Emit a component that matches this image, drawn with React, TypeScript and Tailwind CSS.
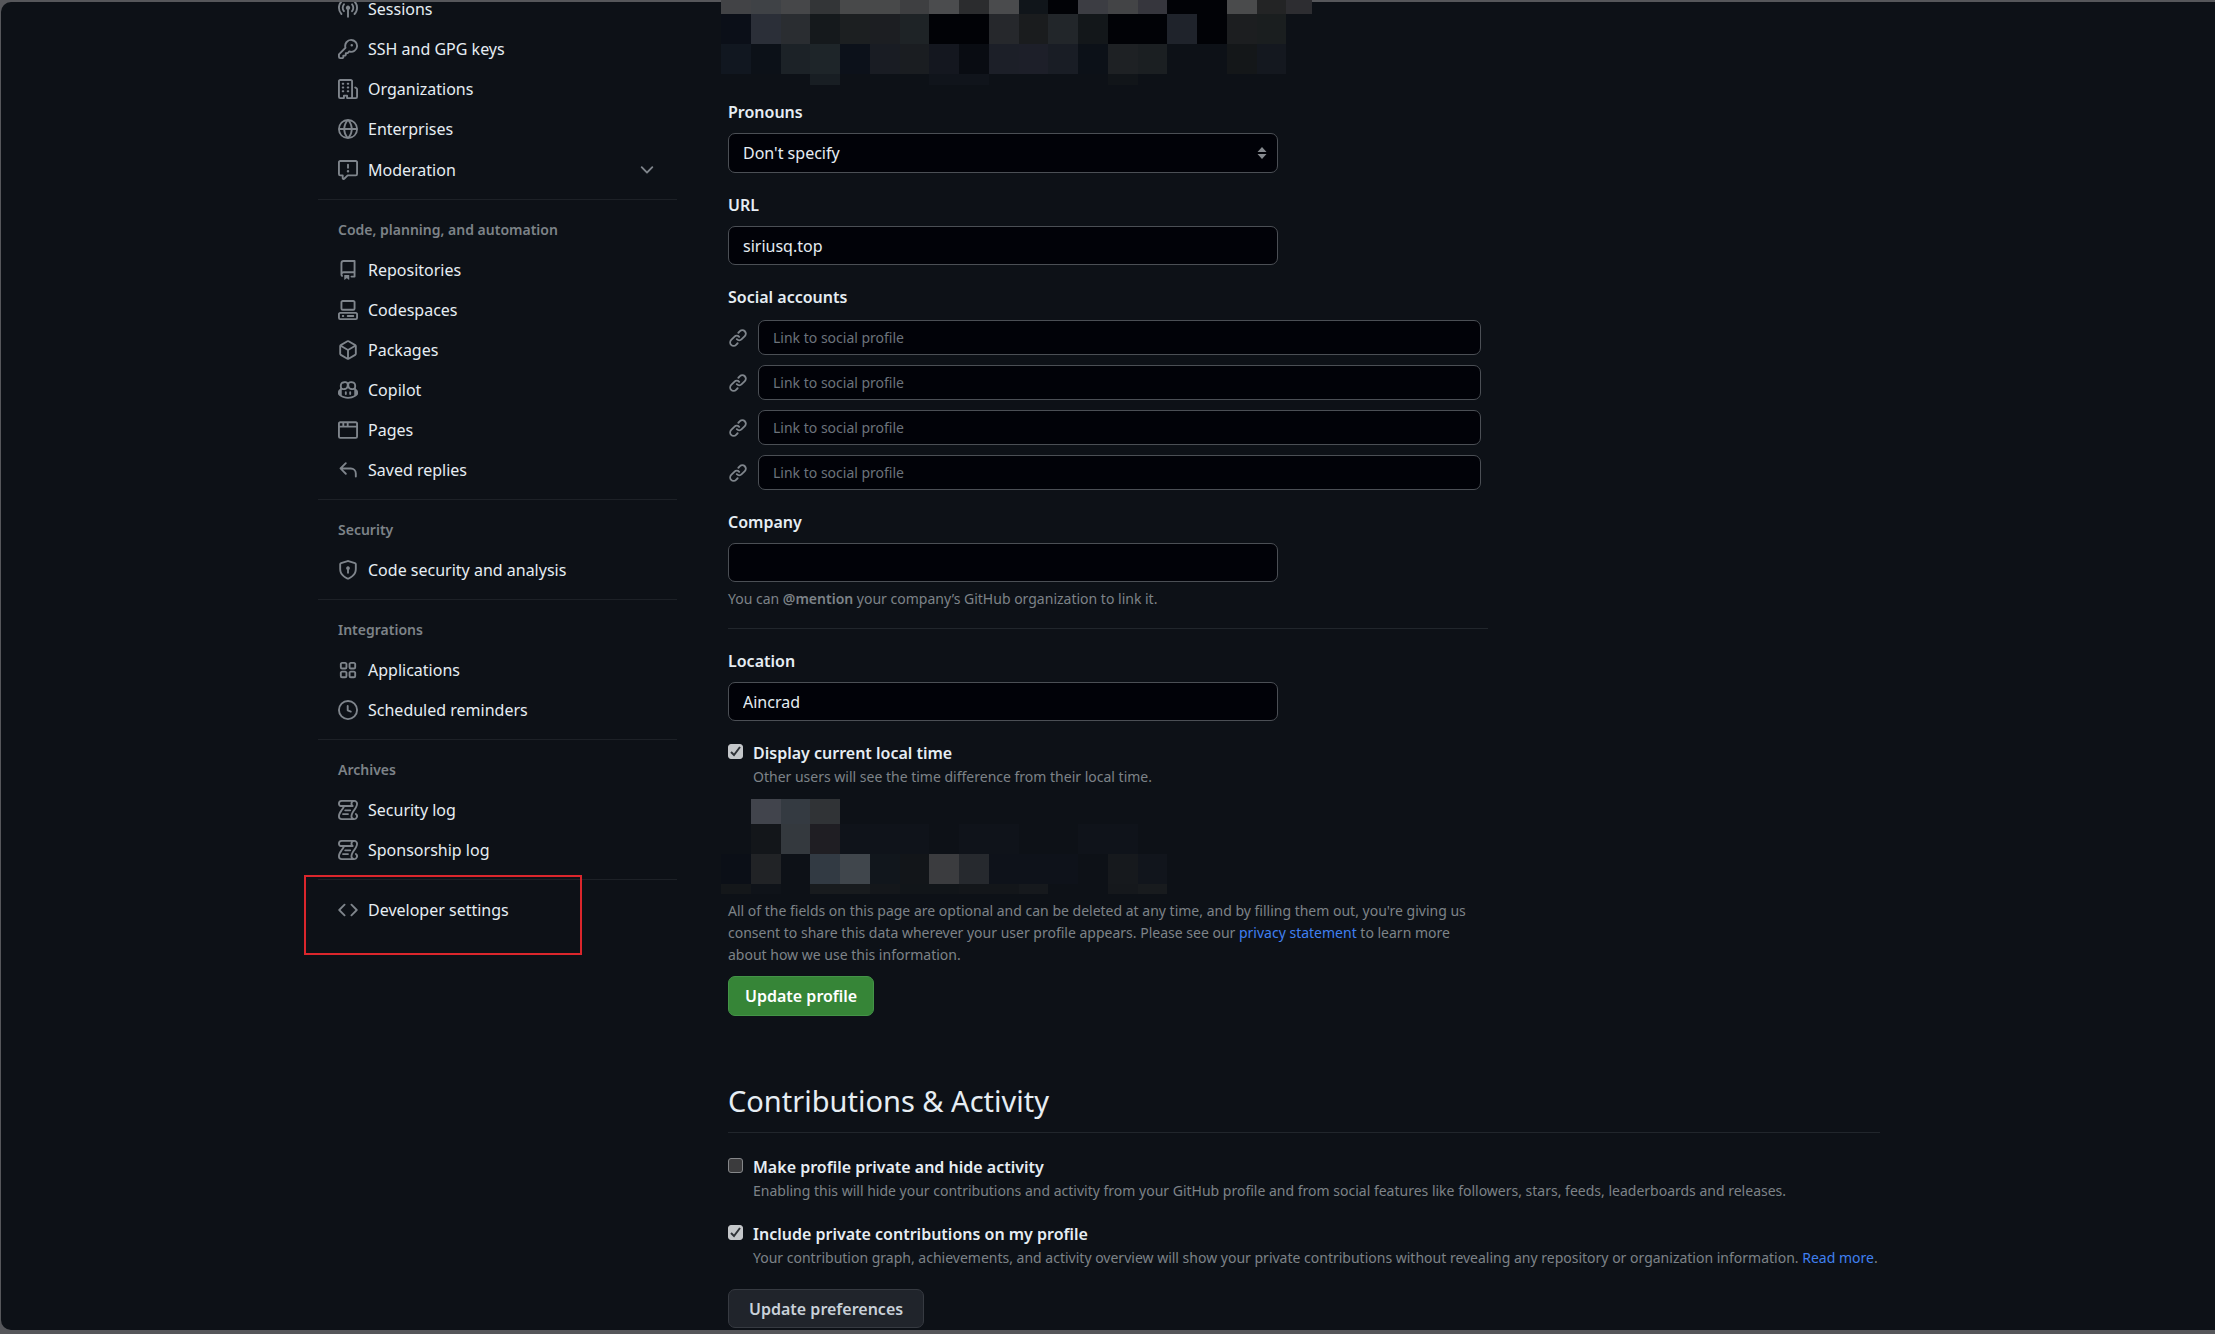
import { useState } from 'react';
import type { ReactNode } from 'react';

const paths = {
  broadcast:
    'M8.75 8.582v5.668a.75.75 0 0 1-1.5 0V8.582a1.75 1.75 0 1 1 1.5 0Zm3.983-7.125a.75.75 0 0 1 1.06.026A7.976 7.976 0 0 1 16 7c0 2.139-.84 4.083-2.207 5.517a.75.75 0 1 1-1.086-1.034A6.474 6.474 0 0 0 14.5 7a6.474 6.474 0 0 0-1.793-4.483.75.75 0 0 1 .026-1.06Zm-9.466 0c.3.286.312.76.026 1.06A6.474 6.474 0 0 0 1.5 7a6.47 6.47 0 0 0 1.793 4.483.75.75 0 0 1-1.086 1.034A7.973 7.973 0 0 1 0 7c0-2.139.84-4.083 2.207-5.517a.75.75 0 0 1 1.06-.026Zm8.556 2.321A4.988 4.988 0 0 1 13 7a4.988 4.988 0 0 1-1.177 3.222.75.75 0 1 1-1.146-.967A3.487 3.487 0 0 0 11.5 7c0-.86-.309-1.645-.823-2.255a.75.75 0 0 1 1.146-.967Zm-6.492.958A3.48 3.48 0 0 0 4.5 7a3.48 3.48 0 0 0 .823 2.255.75.75 0 0 1-1.146.967A4.981 4.981 0 0 1 3 7a4.982 4.982 0 0 1 1.188-3.236.75.75 0 1 1 1.143.972Z',
  key: 'M10.5 0a5.499 5.499 0 1 1-1.288 10.848l-.932.932a.749.749 0 0 1-.53.22H7v.75a.749.749 0 0 1-.22.53l-.5.5a.749.749 0 0 1-.53.22H5v.75a.749.749 0 0 1-.22.53l-.5.5a.749.749 0 0 1-.53.22h-2A1.75 1.75 0 0 1 0 14.25v-2c0-.199.079-.389.22-.53l4.932-4.932A5.5 5.5 0 0 1 10.5 0Zm-4 5.5c-.001.431.069.86.205 1.269a.75.75 0 0 1-.181.768L1.5 12.56v1.69c0 .138.112.25.25.25h1.69l.06-.06v-1.19a.75.75 0 0 1 .75-.75h1.19l.06-.06v-1.19a.75.75 0 0 1 .75-.75h1.19l1.023-1.025a.75.75 0 0 1 .768-.18A4 4 0 1 0 6.5 5.5ZM11 6a1 1 0 1 1 0-2 1 1 0 0 1 0 2Z',
  organization:
    'M1.75 16A1.75 1.75 0 0 1 0 14.25V1.75C0 .784.784 0 1.75 0h8.5C11.216 0 12 .784 12 1.75v12.5c0 .085-.006.168-.018.25h2.268a.25.25 0 0 0 .25-.25V8.285a.25.25 0 0 0-.111-.208l-1.055-.703a.749.749 0 1 1 .832-1.248l1.055.703c.487.325.779.871.779 1.456v5.965A1.75 1.75 0 0 1 14.25 16h-3.5a.766.766 0 0 1-.197-.026c-.099.017-.2.026-.303.026h-3a.75.75 0 0 1-.75-.75V14h-1v1.25a.75.75 0 0 1-.75.75Zm-.25-1.75c0 .138.112.25.25.25H4v-1.25a.75.75 0 0 1 .75-.75h2.5a.75.75 0 0 1 .75.75v1.25h2.25a.25.25 0 0 0 .25-.25V1.75a.25.25 0 0 0-.25-.25h-8.5a.25.25 0 0 0-.25.25ZM3.75 6h.5a.75.75 0 0 1 0 1.5h-.5a.75.75 0 0 1 0-1.5ZM3 3.75A.75.75 0 0 1 3.75 3h.5a.75.75 0 0 1 0 1.5h-.5A.75.75 0 0 1 3 3.75Zm4 3A.75.75 0 0 1 7.75 6h.5a.75.75 0 0 1 0 1.5h-.5A.75.75 0 0 1 7 6.75ZM7.75 3h.5a.75.75 0 0 1 0 1.5h-.5a.75.75 0 0 1 0-1.5ZM3 9.75A.75.75 0 0 1 3.75 9h.5a.75.75 0 0 1 0 1.5h-.5A.75.75 0 0 1 3 9.75ZM7.75 9h.5a.75.75 0 0 1 0 1.5h-.5a.75.75 0 0 1 0-1.5Z',
  globe:
    'M8 0a8 8 0 1 1 0 16A8 8 0 0 1 8 0ZM5.78 8.75a9.64 9.64 0 0 0 1.363 4.177c.255.426.542.832.857 1.215.245-.296.551-.705.857-1.215A9.64 9.64 0 0 0 10.22 8.75Zm4.44-1.5a9.64 9.64 0 0 0-1.363-4.177c-.307-.51-.612-.919-.857-1.215a9.927 9.927 0 0 0-.857 1.215A9.64 9.64 0 0 0 5.78 7.25Zm-5.944 1.5H1.543a6.507 6.507 0 0 0 4.666 5.5c-.123-.181-.24-.365-.352-.552-.715-1.192-1.437-2.874-1.581-4.948Zm-2.733-1.5h2.733c.144-2.074.866-3.756 1.58-4.948.12-.197.237-.381.353-.552a6.507 6.507 0 0 0-4.666 5.5Zm10.181 1.5c-.144 2.074-.866 3.756-1.58 4.948-.12.197-.237.381-.353.552a6.507 6.507 0 0 0 4.666-5.5Zm2.733-1.5a6.507 6.507 0 0 0-4.666-5.5c.123.181.24.365.353.552.714 1.192 1.436 2.874 1.58 4.948Z',
  report:
    'M0 1.75C0 .784.784 0 1.75 0h12.5C15.216 0 16 .784 16 1.75v9.5A1.75 1.75 0 0 1 14.25 13H8.06l-2.573 2.573A1.458 1.458 0 0 1 3 14.543V13H1.75A1.75 1.75 0 0 1 0 11.25Zm1.75-.25a.25.25 0 0 0-.25.25v9.5c0 .138.112.25.25.25h2a.75.75 0 0 1 .75.75v2.19l2.72-2.72a.749.749 0 0 1 .53-.22h6.5a.25.25 0 0 0 .25-.25v-9.5a.25.25 0 0 0-.25-.25Zm7 2.25v2.5a.75.75 0 0 1-1.5 0v-2.5a.75.75 0 0 1 1.5 0ZM9 9a1 1 0 1 1-2 0 1 1 0 0 1 2 0Z',
  chevronDown:
    'M12.78 5.22a.749.749 0 0 1 0 1.06l-4.25 4.25a.749.749 0 0 1-1.06 0L3.22 6.28a.749.749 0 1 1 1.06-1.06L8 8.939l3.72-3.719a.749.749 0 0 1 1.06 0Z',
  repo: 'M2 2.5A2.5 2.5 0 0 1 4.5 0h8.75a.75.75 0 0 1 .75.75v12.5a.75.75 0 0 1-.75.75h-2.5a.75.75 0 0 1 0-1.5h1.75v-2h-8a1 1 0 0 0-.714 1.7.75.75 0 1 1-1.072 1.05A2.495 2.495 0 0 1 2 11.5Zm10.5-1h-8a1 1 0 0 0-1 1v6.708A2.486 2.486 0 0 1 4.5 9h8ZM5 12.25a.25.25 0 0 1 .25-.25h3.5a.25.25 0 0 1 .25.25v3.25a.25.25 0 0 1-.4.2l-1.45-1.087a.249.249 0 0 0-.3 0L5.4 15.7a.25.25 0 0 1-.4-.2Z',
  codespaces:
    'M0 11.25c0-.966.784-1.75 1.75-1.75h12.5c.966 0 1.75.784 1.75 1.75v3A1.75 1.75 0 0 1 14.25 16H1.75A1.75 1.75 0 0 1 0 14.25Zm2-9.5C2 .784 2.784 0 3.75 0h8.5C13.216 0 14 .784 14 1.75v5a1.75 1.75 0 0 1-1.75 1.75h-8.5A1.75 1.75 0 0 1 2 6.75Zm1.75-.25a.25.25 0 0 0-.25.25v5c0 .138.112.25.25.25h8.5a.25.25 0 0 0 .25-.25v-5a.25.25 0 0 0-.25-.25Zm-2 9.5a.25.25 0 0 0-.25.25v3c0 .138.112.25.25.25h12.5a.25.25 0 0 0 .25-.25v-3a.25.25 0 0 0-.25-.25ZM7 12.75a.75.75 0 0 1 .75-.75h4.5a.75.75 0 0 1 0 1.5h-4.5a.75.75 0 0 1-.75-.75Zm-4 0a.75.75 0 0 1 .75-.75h.5a.75.75 0 0 1 0 1.5h-.5a.75.75 0 0 1-.75-.75Z',
  package:
    'm8.878.392 5.25 3.045c.54.314.872.89.872 1.514v6.098a1.75 1.75 0 0 1-.872 1.514l-5.25 3.045a1.75 1.75 0 0 1-1.756 0l-5.25-3.045A1.75 1.75 0 0 1 1 11.049V4.951c0-.624.332-1.201.872-1.514L7.122.392a1.75 1.75 0 0 1 1.756 0ZM7.875 1.69l-4.63 2.685L8 7.133l4.755-2.758-4.63-2.685a.248.248 0 0 0-.25 0ZM2.5 5.677v5.372c0 .09.047.171.125.216l4.625 2.683V8.432Zm6.25 8.271 4.625-2.683a.25.25 0 0 0 .125-.216V5.677L8.75 8.432Z',
  copilot:
    'M7.998 15.035c-4.562 0-7.873-2.914-7.998-3.749V9.338c.085-.628.677-1.686 1.588-2.065.013-.07.024-.143.036-.218.029-.183.06-.384.126-.612-.201-.508-.254-1.084-.254-1.656 0-.87.128-1.769.693-2.484.579-.733 1.494-1.124 2.724-1.261 1.206-.134 2.262.034 2.944.765.05.053.096.108.139.165.044-.057.094-.112.143-.165.682-.731 1.738-.899 2.944-.765 1.23.137 2.145.528 2.724 1.261.566.715.693 1.614.693 2.484 0 .572-.053 1.148-.254 1.656.066.228.098.429.126.612.012.076.024.148.037.218.924.385 1.522 1.471 1.591 2.095v1.872c0 .766-3.351 3.795-8.002 3.795Zm0-1.485c2.28 0 4.584-1.11 5.002-1.433V7.862l-.023-.116c-.49.21-1.075.291-1.727.291-1.146 0-2.059-.327-2.71-.991A3.222 3.222 0 0 1 8 6.303a3.24 3.24 0 0 1-.544.743c-.65.664-1.563.991-2.71.991-.652 0-1.236-.081-1.727-.291l-.023.116v4.255c.419.323 2.722 1.433 5.002 1.433ZM6.762 2.83c-.193-.206-.637-.413-1.682-.297-1.019.113-1.479.404-1.713.7-.247.312-.369.789-.369 1.554 0 .793.129 1.171.308 1.371.162.181.519.379 1.442.379.853 0 1.339-.235 1.638-.54.315-.322.527-.827.617-1.553.117-.935-.037-1.395-.241-1.614Zm4.155-.297c-1.044-.116-1.488.091-1.681.297-.204.219-.359.679-.242 1.614.091.726.303 1.231.618 1.553.299.305.784.54 1.638.54.922 0 1.28-.198 1.442-.379.179-.2.308-.578.308-1.371 0-.765-.123-1.242-.37-1.554-.233-.296-.693-.587-1.713-.7ZM6.25 9.037a.75.75 0 0 1 .75.75v1.501a.75.75 0 0 1-1.5 0V9.787a.75.75 0 0 1 .75-.75Zm4.25.75v1.501a.75.75 0 0 1-1.5 0V9.787a.75.75 0 0 1 1.5 0Z',
  browser:
    'M0 2.75C0 1.784.784 1 1.75 1h12.5c.966 0 1.75.784 1.75 1.75v10.5A1.75 1.75 0 0 1 14.25 15H1.75A1.75 1.75 0 0 1 0 13.25ZM14.5 6h-13v7.25c0 .138.112.25.25.25h12.5a.25.25 0 0 0 .25-.25Zm-6-3.5v2h6V2.75a.25.25 0 0 0-.25-.25ZM5 2.5v2h2v-2Zm-3.25 0a.25.25 0 0 0-.25.25V4.5h2v-2Z',
  reply:
    'M6.78 1.97a.75.75 0 0 1 0 1.06L3.81 6h6.44A4.75 4.75 0 0 1 15 10.75v2.5a.75.75 0 0 1-1.5 0v-2.5a3.25 3.25 0 0 0-3.25-3.25H3.81l2.97 2.97a.749.749 0 0 1-.326 1.275.749.749 0 0 1-.734-.215L1.47 7.28a.75.75 0 0 1 0-1.06l4.25-4.25a.75.75 0 0 1 1.06 0Z',
  shieldLock:
    'm8.533.133 5.25 1.68A1.75 1.75 0 0 1 15 3.48V7c0 1.566-.32 3.182-1.303 4.682-.983 1.498-2.585 2.813-5.032 3.855a1.697 1.697 0 0 1-1.33 0c-2.447-1.042-4.049-2.357-5.032-3.855C1.32 10.182 1 8.566 1 7V3.48a1.75 1.75 0 0 1 1.217-1.667l5.25-1.68a1.748 1.748 0 0 1 1.066 0Zm-.61 1.429.001.001-5.25 1.68a.251.251 0 0 0-.174.237V7c0 1.36.275 2.666 1.057 3.859.784 1.194 2.121 2.342 4.366 3.298a.196.196 0 0 0 .154 0c2.245-.957 3.582-2.103 4.366-3.297C13.225 9.666 13.5 8.358 13.5 7V3.48a.25.25 0 0 0-.174-.238l-5.25-1.68a.25.25 0 0 0-.153 0ZM9.5 6.5c0 .536-.286 1.032-.75 1.3v2.45a.75.75 0 0 1-1.5 0V7.8A1.5 1.5 0 1 1 9.5 6.5Z',
  apps: 'M1.5 3.25c0-.966.784-1.75 1.75-1.75h2.5c.966 0 1.75.784 1.75 1.75v2.5A1.75 1.75 0 0 1 5.75 7.5h-2.5A1.75 1.75 0 0 1 1.5 5.75Zm7 0c0-.966.784-1.75 1.75-1.75h2.5c.966 0 1.75.784 1.75 1.75v2.5a1.75 1.75 0 0 1-1.75 1.75h-2.5A1.75 1.75 0 0 1 8.5 5.75Zm-7 7c0-.966.784-1.75 1.75-1.75h2.5c.966 0 1.75.784 1.75 1.75v2.5a1.75 1.75 0 0 1-1.75 1.75h-2.5a1.75 1.75 0 0 1-1.75-1.75Zm7 0c0-.966.784-1.75 1.75-1.75h2.5c.966 0 1.75.784 1.75 1.75v2.5a1.75 1.75 0 0 1-1.75 1.75h-2.5a1.75 1.75 0 0 1-1.75-1.75ZM3.25 3a.25.25 0 0 0-.25.25v2.5c0 .138.112.25.25.25h2.5A.25.25 0 0 0 6 5.75v-2.5A.25.25 0 0 0 5.75 3Zm7 0a.25.25 0 0 0-.25.25v2.5c0 .138.112.25.25.25h2.5a.25.25 0 0 0 .25-.25v-2.5a.25.25 0 0 0-.25-.25Zm-7 7a.25.25 0 0 0-.25.25v2.5c0 .138.112.25.25.25h2.5a.25.25 0 0 0 .25-.25v-2.5a.25.25 0 0 0-.25-.25Zm7 0a.25.25 0 0 0-.25.25v2.5c0 .138.112.25.25.25h2.5a.25.25 0 0 0 .25-.25v-2.5a.25.25 0 0 0-.25-.25Z',
  clock:
    'M8 0a8 8 0 1 1 0 16A8 8 0 0 1 8 0ZM1.5 8a6.5 6.5 0 1 0 13 0 6.5 6.5 0 0 0-13 0Zm7-3.25v2.992l2.028.812a.75.75 0 0 1-.557 1.392l-2.5-1A.751.751 0 0 1 7 8.25v-3.5a.75.75 0 0 1 1.5 0Z',
  log: 'M5 8.25a.75.75 0 0 1 .75-.75h4a.75.75 0 0 1 0 1.5h-4A.75.75 0 0 1 5 8.25ZM4 10.5A.75.75 0 0 0 4 12h4a.75.75 0 0 0 0-1.5H4ZM13-.005c1.654 0 3 1.328 3 3 0 .982-.338 1.933-.783 2.818-.443.879-1.028 1.758-1.582 2.588l-.011.017c-.568.853-1.104 1.659-1.501 2.446-.398.789-.623 1.494-.623 2.136a1.5 1.5 0 1 0 2.333-1.248.75.75 0 0 1 .834-1.246A3 3 0 0 1 13 16H3a3 3 0 0 1-3-3c0-1.582.891-3.135 1.777-4.506.209-.322.418-.637.623-.946.473-.709.923-1.386 1.287-2.048H2.51c-.576 0-1.381-.133-1.907-.783A2.68 2.68 0 0 1 0 2.995a3 3 0 0 1 3-3Zm0 1.5a1.5 1.5 0 0 0-1.5 1.5c0 .476.223.834.667 1.132A.75.75 0 0 1 11.75 5.5H5.368c-.467 1.003-1.141 2.015-1.773 2.963-.192.289-.381.571-.558.845C2.13 10.711 1.5 11.916 1.5 13A1.5 1.5 0 0 0 3 14.5h7.401A2.989 2.989 0 0 1 10 13c0-.979.338-1.928.784-2.812.441-.874 1.023-1.748 1.575-2.576l.017-.026c.568-.853 1.103-1.658 1.501-2.448.398-.79.623-1.497.623-2.143 0-.838-.669-1.5-1.5-1.5Zm-10 0a1.5 1.5 0 0 0-1.5 1.5c0 .321.1.569.27.778.097.12.325.227.74.227h7.674A2.737 2.737 0 0 1 10 2.995c0-.546.146-1.059.401-1.5Z',
  code: 'm11.28 3.22 4.25 4.25a.75.75 0 0 1 0 1.06l-4.25 4.25a.749.749 0 0 1-1.275-.326.749.749 0 0 1 .215-.734L13.94 8l-3.72-3.72a.749.749 0 0 1 .326-1.275.749.749 0 0 1 .734.215Zm-6.56 0a.751.751 0 0 1 1.042.018.751.751 0 0 1 .018 1.042L2.06 8l3.72 3.72a.749.749 0 0 1-.326 1.275.749.749 0 0 1-.734-.215L.47 8.53a.75.75 0 0 1 0-1.06Z',
  link: 'm7.775 3.275 1.25-1.25a3.5 3.5 0 1 1 4.95 4.95l-2.5 2.5a3.5 3.5 0 0 1-4.95 0 .751.751 0 0 1 .018-1.042.751.751 0 0 1 1.042-.018 1.998 1.998 0 0 0 2.83 0l2.5-2.5a2.002 2.002 0 0 0-2.83-2.83l-1.25 1.25a.751.751 0 0 1-1.042-.018.751.751 0 0 1-.018-1.042Zm-4.69 9.64a1.998 1.998 0 0 0 2.83 0l1.25-1.25a.751.751 0 0 1 1.042.018.751.751 0 0 1 .018 1.042l-1.25 1.25a3.5 3.5 0 1 1-4.95-4.95l2.5-2.5a3.5 3.5 0 0 1 4.95 0 .751.751 0 0 1-.018 1.042.751.751 0 0 1-1.042.018 1.998 1.998 0 0 0-2.83 0l-2.5 2.5a1.998 1.998 0 0 0 0 2.83Z',
};

type IconName = keyof typeof paths;

function Icon({ name }: { name: IconName }) {
  return (
    <svg viewBox="0 0 16 16" className="size-5 shrink-0 fill-[#7f858c]" aria-hidden="true">
      <path d={paths[name]} />
    </svg>
  );
}

type NavItem = { icon: IconName; label: string };

const groups: { title: string; items: NavItem[] }[] = [
  {
    title: 'Code, planning, and automation',
    items: [
      { icon: 'repo', label: 'Repositories' },
      { icon: 'codespaces', label: 'Codespaces' },
      { icon: 'package', label: 'Packages' },
      { icon: 'copilot', label: 'Copilot' },
      { icon: 'browser', label: 'Pages' },
      { icon: 'reply', label: 'Saved replies' },
    ],
  },
  { title: 'Security', items: [{ icon: 'shieldLock', label: 'Code security and analysis' }] },
  {
    title: 'Integrations',
    items: [
      { icon: 'apps', label: 'Applications' },
      { icon: 'clock', label: 'Scheduled reminders' },
    ],
  },
  {
    title: 'Archives',
    items: [
      { icon: 'log', label: 'Security log' },
      { icon: 'log', label: 'Sponsorship log' },
    ],
  },
];

function NavLink({ icon, label }: NavItem) {
  return (
    <a href="#" className="flex h-10 items-center gap-[10px] px-5">
      <Icon name={icon} />
      <span>{label}</span>
    </a>
  );
}

function Divider() {
  return <hr className="mt-[9px] mb-[10px] border-[#1d2127]" />;
}

function Sidebar() {
  return (
    <aside className="w-[359px] shrink-0 overflow-y-clip">
      <nav aria-label="Settings" className="-mt-[13px]">
        <NavLink icon="broadcast" label="Sessions" />
        <NavLink icon="key" label="SSH and GPG keys" />
        <NavLink icon="organization" label="Organizations" />
        <NavLink icon="globe" label="Enterprises" />
        <button type="button" className="flex h-[41px] w-full items-center gap-[10px] px-5">
          <Icon name="report" />
          <span>Moderation</span>
          <span className="ml-auto">
            <Icon name="chevronDown" />
          </span>
        </button>
        <Divider />
        {groups.map((group) => (
          <section key={group.title}>
            <h3 className="flex h-10 items-center px-5 text-sm font-semibold text-[#7d8388]">{group.title}</h3>
            {group.items.map((item) => (
              <NavLink key={item.label} icon={item.icon} label={item.label} />
            ))}
            <Divider />
          </section>
        ))}
        <div className="relative">
          <NavLink icon="code" label="Developer settings" />
          <div className="pointer-events-none absolute -top-[15px] -left-[14px] h-20 w-[278px] border-2 border-[#db262c]" />
        </div>
      </nav>
    </aside>
  );
}

type MosaicRow = { y: number; height: number; cells: string[] };

const B = '#010206';
const N = '#0d1117';

const headerMosaic: MosaicRow[] = [
  { y: 0, height: 14, cells: ['#424346', '#3f4246', '#464749', '#333537', '#48494a', '#48494a', '#3e3f41', '#4b4c4e', '#2b2c2e', '#4a4b4d', '#10151a', B, '#3c3d43', '#434446', '#36363d', B, B, '#4a4b4c', '#232425', '#2d2d31'] },
  { y: 14, height: 30, cells: ['#0b0f18', '#2b2f38', '#2a2d31', '#15191c', '#1c1f21', '#1c1e22', '#1e2326', B, B, '#26282c', '#1a1c1e', '#22262a', '#13171a', B, B, '#1f232b', B, '#1c1e20', '#1a1e1f', N] },
  { y: 44, height: 30, cells: ['#111720', '#0c1118', '#1c2227', '#1e2529', '#0c111a', '#191c23', '#1a1d21', '#14171f', '#090c12', '#1c1f28', '#1d1f29', '#191d25', '#0c1118', '#1e2124', '#1b1f22', N, N, '#141719', '#14181f', N] },
  { y: 74, height: 11, cells: [N, N, N, '#181e23', N, N, N, '#10141b', '#10141b', N, N, N, N, '#111519', N, N, N, N, N, N] },
];

const timeMosaic: MosaicRow[] = [
  { y: 0, height: 25, cells: [N, '#41444c', '#343a41', '#303336'] },
  { y: 25, height: 30, cells: [N, '#13161a', '#34393e', '#1f1e23', '#0f131a', '#0f131a', '#0f131a', N, '#0f131a', '#0f131a', N, N, '#0f131a', '#0f131a'] },
  { y: 55, height: 30, cells: ['#0b0f17', '#212326', N, '#323a43', '#40464c', '#11161c', '#121519', '#3b3c3f', '#26292e', '#0e121a', '#0e121a', '#0e121a', N, '#16191d', '#11151c'] },
  { y: 85, height: 10, cells: ['#14171a', '#0f1319', N, '#181b1e', '#181b1e', '#14171b', '#111519', '#111519', '#13161a', '#13161a', '#16191d', N, N, '#15181c', '#181b1e'] },
];

function Mosaic({ rows, width, height }: { rows: MosaicRow[]; width: number; height: number }) {
  return (
    <svg width={width} height={height} viewBox={`0 0 ${width} ${height}`} shapeRendering="crispEdges" aria-hidden="true">
      {rows.map((row) =>
        row.cells.map((fill, i) => (
          <rect key={`${row.y}-${i}`} x={i * 29.75} y={row.y} width={30} height={row.height} fill={fill} />
        )),
      )}
    </svg>
  );
}

const fieldBox = 'w-full max-w-[550px] rounded-[7px] border border-[#4b4f55] bg-[#010208] px-[14px] text-[#e6edf3]';

function TextField({ id, label, value }: { id: string; label: string; value: string }) {
  return (
    <div className="flex flex-col gap-2">
      <label htmlFor={id} className="leading-[25px] font-semibold">
        {label}
      </label>
      <input id={id} type="text" defaultValue={value} className={`h-[39px] ${fieldBox}`} />
    </div>
  );
}

function CheckField({ id, label, checked, children }: { id: string; label: string; checked: boolean; children: ReactNode }) {
  const [on, setOn] = useState(checked);
  return (
    <div className="flex gap-[10px]">
      <span className="relative mt-[3px] size-[15px] shrink-0">
        <input
          id={id}
          type="checkbox"
          checked={on}
          onChange={(e) => setOn(e.target.checked)}
          aria-describedby={`${id}-note`}
          className="block size-[15px] appearance-none rounded-[3px] border border-[#85878a] bg-[#3b3b3d] checked:border-[#c4c7ca] checked:bg-[#c4c7ca]"
        />
        {on && (
          <svg viewBox="0 0 15 15" className="pointer-events-none absolute inset-0 size-[15px]" aria-hidden="true">
            <path d="M3 8l3 3 6-8" fill="none" stroke="#2f3338" strokeWidth="2" />
          </svg>
        )}
      </span>
      <div>
        <label htmlFor={id} className="block leading-[25px] font-semibold">
          {label}
        </label>
        <p id={`${id}-note`} className="text-sm leading-[22px] text-[#7d8388]">
          {children}
        </p>
      </div>
    </div>
  );
}

export default function App() {
  return (
    <div className="flex min-h-screen flex-col bg-[#56575b] pt-[2px] pb-1 pl-px font-['Noto_Sans',sans-serif] text-base text-[#e6edf3]">
      <div className="grow rounded-l-[10px] bg-[#0d1117]">
        <div className="mx-auto flex max-w-[1580px] gap-[51px] pr-[18px]">
          <Sidebar />
          <main className="min-w-0 grow">
            <div className="-mt-[2px] -ml-[7px]">
              <Mosaic rows={headerMosaic} width={591} height={85} />
            </div>

            <form className="mt-[15px] max-w-[760px]" onSubmit={(e) => e.preventDefault()}>
              <div className="flex flex-col gap-5">
                <div className="flex flex-col gap-2">
                  <label htmlFor="pronouns" className="leading-[25px] font-semibold">
                    Pronouns
                  </label>
                  <div className="relative max-w-[550px]">
                    <select id="pronouns" className={`h-10 appearance-none ${fieldBox}`}>
                      <option>Don't specify</option>
                      <option>they/them</option>
                      <option>she/her</option>
                      <option>he/him</option>
                    </select>
                    <svg viewBox="0 0 10 12" className="pointer-events-none absolute top-[14px] right-[11px] h-3 w-[10px] fill-[#85898e]" aria-hidden="true">
                      <path d="M5 0l4.500 5h-9zM5 12l4.500-5h-9z" />
                    </svg>
                  </div>
                </div>

                <TextField id="url" label="URL" value="siriusq.top" />

                <fieldset>
                  <legend className="mb-[10px] leading-[25px] font-semibold">Social accounts</legend>
                  <div className="flex flex-col gap-[10px]">
                    {[1, 2, 3, 4].map((n) => (
                      <div key={n} className="flex items-center gap-[10px] pr-[7px]">
                        <Icon name="link" />
                        <input
                          type="url"
                          aria-label={`Link to social profile ${n}`}
                          placeholder="Link to social profile"
                          className="h-[35px] w-full rounded-[7px] border border-[#4b4f55] bg-[#010208] px-[14px] text-sm placeholder:text-[#6c737b]"
                        />
                      </div>
                    ))}
                  </div>
                </fieldset>

                <TextField id="company" label="Company" value="" />
              </div>
              <p className="mt-[6px] text-sm leading-[22px] text-[#7d8388]">
                You can <span className="font-semibold">@mention</span> your company’s GitHub organization to link it.
              </p>

              <hr className="mt-[18px] mb-5 border-[#21262c]" />

              <div className="flex flex-col gap-5">
                <TextField id="location" label="Location" value="Aincrad" />
                <CheckField id="local-time" label="Display current local time" checked>
                  Other users will see the time difference from their local time.
                </CheckField>
              </div>

              <div className="mt-[11px] -ml-[7px]">
                <Mosaic rows={timeMosaic} width={446} height={95} />
              </div>

              <p className="mt-[6px] text-sm leading-[22px] text-[#7d8388]">
                All of the fields on this page are optional and can be deleted at any time, and by filling them out, you're giving us
                consent to share this data wherever your user profile appears. Please see our{' '}
                <a href="#" className="text-[#4080f0]">
                  privacy statement
                </a>{' '}
                to learn more about how we use this information.
              </p>
              <button type="submit" className="mt-[10px] h-10 rounded-[7px] border border-[#439447] bg-[#368537] px-4 font-semibold text-white">
                Update profile
              </button>
            </form>

            <form className="mt-16" onSubmit={(e) => e.preventDefault()}>
              <h2 className="border-b border-[#21262c] pb-[10px] text-[29px] leading-[42px]">Contributions &amp; Activity</h2>
              <div className="mt-[22px] flex flex-col gap-5">
                <CheckField id="private-profile" label="Make profile private and hide activity" checked={false}>
                  Enabling this will hide your contributions and activity from your GitHub profile and from social features like
                  followers, stars, feeds, leaderboards and releases.
                </CheckField>
                <CheckField id="private-contributions" label="Include private contributions on my profile" checked>
                  Your contribution graph, achievements, and activity overview will show your private contributions without revealing
                  any repository or organization information.{' '}
                  <a href="#" className="text-[#4080f0]">
                    Read more
                  </a>
                  .
                </CheckField>
              </div>
              <button type="submit" className="mt-5 h-[39px] rounded-[7px] border border-[#363a41] bg-[#20242b] px-5 font-semibold text-[#c9d1d9]">
                Update preferences
              </button>
            </form>
          </main>
        </div>
      </div>
    </div>
  );
}
